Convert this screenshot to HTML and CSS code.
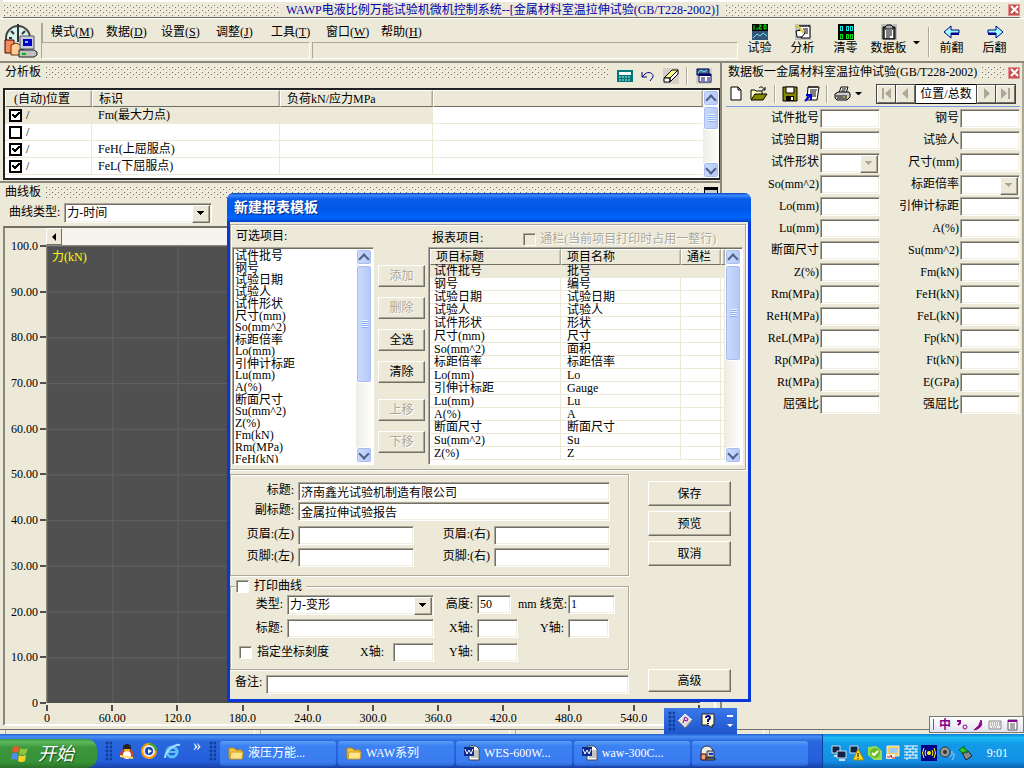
FILE: index.html
```html
<!DOCTYPE html>
<html lang="zh-CN">
<head>
    <meta charset="UTF-8">
    <meta name="viewport" content="width=device-width, initial-scale=1.0">
    <title>WAWP电液比例万能试验机微机控制系统</title>
    <link rel="stylesheet" href="styles.css">
</head>
<body>
    <div class="app">
        <header class="titlebar">
            <span class="grip"></span>
            <h1>WAWP电液比例万能试验机微机控制系统--[金属材料室温拉伸试验(GB/T228-2002)]</h1>
            <span class="grip"></span>
            <button class="close" aria-label="关闭"><svg width="9" height="9" viewBox="0 0 9 9"><path d="M1 1l7 7M8 1l-7 7" stroke="#fff" stroke-width="2"/></svg></button>
        </header>

        <div class="toolbar">
            <svg class="logo" width="34" height="36" viewBox="0 0 34 36">
                <circle cx="14" cy="15" r="12" fill="#d8f4ec" stroke="#444" stroke-width="2"/>
                <path d="M14 5v14M14 1v4M5 15h3M20 15h4M7 8l3 3M21 8l-3 3" stroke="#333" stroke-width="2"/>
                <path d="M1 17h9v13H1z" fill="#f58a5c" stroke="#400" />
                <path d="M7 22l5-2 5 2v10H7z" fill="#fc9" stroke="#630"/>
                <path d="M16 13h14v13H16z" fill="#c8ccd8" stroke="#556"/>
                <path d="M19 16h9v7h-9z" fill="#00c"/><path d="M21 18h3v2h-3z" fill="#7cf"/>
                <path d="M15 27h15l3 2v3l-3 2H15z" fill="#c0c0c0" stroke="#222"/>
                <path d="M18 31h4" stroke="#0b0" stroke-width="2"/>
            </svg>
            <div class="menu-area">
                <nav class="menu">
                    <a href="#">模式(<u>M</u>)</a>
                    <a href="#">数据(<u>D</u>)</a>
                    <a href="#">设置(<u>S</u>)</a>
                    <a href="#">调整(<u>J</u>)</a>
                    <a href="#">工具(<u>T</u>)</a>
                    <a href="#">窗口(<u>W</u>)</a>
                    <a href="#">帮助(<u>H</u>)</a>
                </nav>
                <div class="slots"><span></span><span></span></div>
            </div>
            <div class="tools">
                <button><svg width="16" height="16" viewBox="0 0 16 16"><path d="M0 0h16v16H0z" fill="#357"/><path d="M0 0h16v7H0z" fill="#000"/><path d="M2 1v5M5 4v2M7 1h2v2H7v2h3M12 1h2v4h-2z" fill="none" stroke="#0f0"/><path d="M1 14l4-4 3 2 3-3 4 3" fill="none" stroke="#6ee"/></svg>试验</button>
                <button><svg width="16" height="16" viewBox="0 0 16 16"><path d="M0 0h16v16H0z" fill="#c0c0c0"/><path d="M4 2h11v12H6z" fill="#fff" stroke="#000"/><path d="M5 1v2M8 1v2M11 1v2M14 1v2M8 5h5M9 7h4M9 9h4" stroke="#000"/><path d="M1 7l5-1 4 3-3 4H2z" fill="#fff" stroke="#000"/><path d="M2 1l7 8" stroke="#dc3" stroke-width="2"/></svg>分析</button>
                <button><svg width="16" height="16" viewBox="0 0 16 16" shape-rendering="crispEdges"><path d="M0 0h16v16H0z"/><path d="M2 2h2v4H2zM8 2h2v4H8zM12 2h2v4h-2z" fill="none" stroke="#0ee"/><path d="M2 10h2v4H2zM8 10h2v4H8zM12 10h2v4h-2z" fill="none" stroke="#0d0"/></svg>清零</button>
                <button><svg width="16" height="16" viewBox="0 0 16 16"><path d="M0 0h16v16H0z" fill="#c0c0c0"/><path d="M2 3h12v12H2z" fill="#555" stroke="#000"/><path d="M4 5h8v9H4z" fill="#fff"/><path d="M4 3l2-2h4l2 2v2H4z" fill="#aaa" stroke="#000"/><path d="M5 7h6M5 9h6M5 11h6M5 13h4" stroke="#000"/></svg>数据板</button>
                <span class="drop"></span>
                <span class="bar"></span>
                <button><svg width="18" height="16" viewBox="0 0 18 16"><path d="M1 8l7-6v4h8v3H8v5z" fill="#9ff" stroke="#008"/><path d="M8 10h8" stroke="#008" stroke-width="2"/></svg>前翻</button>
                <button><svg width="18" height="16" viewBox="0 0 18 16"><path d="M17 8l-7-6v4H2v3h8v5z" fill="#9ff" stroke="#008"/><path d="M10 10H2" stroke="#008" stroke-width="2"/></svg>后翻</button>
            </div>
        </div>

        <main class="main">
            <div class="left">
                <section class="panel analysis">
                    <div class="panel-title">
                        <h2>分析板</h2>
                        <span class="grip"></span>
                        <button aria-label="计算"><svg width="16" height="14" viewBox="0 0 16 14"><path d="M0 1h16v12H0z" fill="#077"/><path d="M2 3h12v3H2z" fill="#fff"/><path d="M2 8h12M2 11h12" stroke="#bee" stroke-dasharray="2 1"/></svg></button>
                        <button aria-label="撤消"><svg width="14" height="14" viewBox="0 0 14 14"><path d="M1 3v5h5M1 8l3-3c3-3 9-1 8 3l-3 4" fill="none" stroke="#008"/></svg></button>
                        <button aria-label="擦除" class="shade"><svg width="16" height="16" viewBox="0 0 16 16"><path d="M1 10l8-8h6l-8 8z" fill="#ff8" stroke="#000"/><path d="M1 10h6v4H1zM7 10l8-8v4l-8 8z" fill="#fff" stroke="#000"/></svg></button>
                        <span class="bar"></span>
                        <button aria-label="视图" class="shade"><svg width="16" height="16" viewBox="0 0 16 16"><path d="M1 1h12v6H1z" fill="#468" stroke="#006"/><path d="M2 5l3-3 3 2 3-2" stroke="#7ee" fill="none"/><path d="M3 6h12v8H3z" fill="#fff" stroke="#006"/><path d="M3 7h12" stroke="#006" stroke-width="2"/><path d="M5 10h4M5 12h4M11 10h3M11 12h3" stroke="#006"/></svg></button>
                    </div>
                    <div class="grid-box">
                        <div class="table-wrap">
                            <table class="marks">
                                <thead><tr><th>(自动)位置</th><th>标识</th><th>负荷kN/应力MPa</th><th></th></tr></thead>
                                <tbody>
                                    <tr class="on"><td><label><input type="checkbox" checked>/</label></td><td>Fm(最大力点)</td><td></td><td></td></tr>
                                    <tr><td><label><input type="checkbox">/</label></td><td></td><td></td><td></td></tr>
                                    <tr><td><label><input type="checkbox" checked>/</label></td><td>FeH(上屈服点)</td><td></td><td></td></tr>
                                    <tr><td><label><input type="checkbox" checked>/</label></td><td>FeL(下屈服点)</td><td></td><td></td></tr>
                                </tbody>
                            </table>
                        </div>
                        <div class="scroll"><i class="up"></i><i class="thumb short"></i><i class="down"></i></div>
                    </div>
                </section>

                <section class="panel curve">
                    <div class="panel-title low">
                        <h2>曲线板</h2>
                        <span class="grip"></span>
                        <span class="mini"></span>
                    </div>
                    <div class="curve-type">
                        <label for="curveType">曲线类型:</label>
                        <span class="combo"><select id="curveType"><option>力-时间</option></select></span>
                    </div>
                    <div class="chart">
                        <div class="y-axis">
                            <span>100.0</span><span>90.00</span><span>80.00</span><span>70.00</span><span>60.00</span><span>50.00</span><span>40.00</span><span>30.00</span><span>20.00</span><span>10.00</span><span>0</span>
                        </div>
                        <div class="plot-col">
                            <div class="hscroll"><button aria-label="向左"></button></div>
                            <div class="plot">力(kN)</div>
                            <div class="x-axis">
                                <span>0</span><span>60.00</span><span>120.0</span><span>180.0</span><span>240.0</span><span>300.0</span><span>360.0</span><span>420.0</span><span>480.0</span><span>540.0</span><span>600.0</span>
                            </div>
                        </div>
                    </div>
                </section>
            </div>

            <aside class="right">
                <div class="panel-title low">
                    <h2>数据板一金属材料室温拉伸试验(GB/T228-2002)</h2>
                    <span class="grip"></span>
                    <button class="close" aria-label="关闭数据板"><svg width="9" height="9" viewBox="0 0 9 9"><path d="M1 1l7 7M8 1l-7 7" stroke="#fff" stroke-width="2"/></svg></button>
                </div>
                <div class="data-tools">
                    <button aria-label="新建"><svg width="16" height="16" viewBox="0 0 16 16"><path d="M3 1h7l3 3v10H3zM10 1v3h3" fill="#fff" stroke="#000"/></svg></button>
                    <button aria-label="打开"><svg width="18" height="16" viewBox="0 0 18 16"><path d="M1 13V4h4l1 1h6v3" fill="#ffb" stroke="#000"/><path d="M1 14l4-6h12l-4 6z" fill="#880" stroke="#000"/><path d="M9 2c2-2 4-1 6 2M15 1v3h-3" fill="none" stroke="#000"/></svg></button>
                    <span class="bar"></span>
                    <button aria-label="保存数据"><svg width="16" height="16" viewBox="0 0 16 16"><path d="M1 1h14v14H1z" fill="#880" stroke="#000"/><path d="M4 1h8v6H4z" fill="#fff" stroke="#000"/><path d="M4 10h8v5H4z"/><path d="M9 11h2v3H9z" fill="#fff"/></svg></button>
                    <button aria-label="导入"><svg width="16" height="17" viewBox="0 0 16 17"><path d="M4 2h11l-2 13H3z" fill="#fff" stroke="#000"/><path d="M5 1v2M7 1v2M9 1v2M11 1v2M13 1v2M6 5h7M6 7h6M6 9h6M8 11h4" stroke="#000"/><path d="M1 16l5-5M2 10h5v5" stroke="#00c" stroke-width="2" fill="none"/></svg></button>
                    <span class="bar"></span>
                    <button aria-label="打印"><svg width="17" height="16" viewBox="0 0 17 16"><path d="M5 7l2-6h7l-2 6z" fill="#fff" stroke="#000"/><path d="M1 8l3-2h11l1 2v3l-3 3H3l-2-2z" fill="#ccc" stroke="#000"/><path d="M2 10h11M3 12h10M8 3h4M7 5h4" stroke="#000"/><path d="M9 11h2" stroke="#dd0"/></svg></button>
                    <span class="drop"></span>
                    <div class="pager">
                        <button aria-label="第一条"><svg width="11" height="11" viewBox="0 0 11 11"><path d="M1 0h2v11H1zM10 0v11L4 5.5z" fill="#aca899"/></svg></button>
                        <button aria-label="上一条"><svg width="11" height="11" viewBox="0 0 11 11"><path d="M8 0v11L2 5.5z" fill="#aca899"/></svg></button>
                        <span>位置/总数</span>
                        <button aria-label="下一条"><svg width="11" height="11" viewBox="0 0 11 11"><path d="M3 0v11l6-5.5z" fill="#aca899"/></svg></button>
                        <button aria-label="最后一条"><svg width="11" height="11" viewBox="0 0 11 11"><path d="M8 0h2v11H8zM1 0v11l6-5.5z" fill="#aca899"/></svg></button>
                    </div>
                </div>
                <form class="specs">
                    <label for="d1">试件批号</label><input id="d1"><label for="d2">钢号</label><input id="d2">
                    <label for="d3">试验日期</label><input id="d3"><label for="d4">试验人</label><input id="d4">
                    <label for="d5">试件形状</label><span class="combo off"><select id="d5" disabled></select></span><label for="d6">尺寸(mm)</label><input id="d6">
                    <label for="d7">So(mm^2)</label><input id="d7"><label for="d8">标距倍率</label><span class="combo off"><select id="d8" disabled></select></span>
                    <label for="d9">Lo(mm)</label><input id="d9"><label for="d10">引伸计标距</label><input id="d10">
                    <label for="d11">Lu(mm)</label><input id="d11"><label for="d12">A(%)</label><input id="d12">
                    <label for="d13">断面尺寸</label><input id="d13"><label for="d14">Su(mm^2)</label><input id="d14">
                    <label for="d15">Z(%)</label><input id="d15"><label for="d16">Fm(kN)</label><input id="d16">
                    <label for="d17">Rm(MPa)</label><input id="d17"><label for="d18">FeH(kN)</label><input id="d18">
                    <label for="d19">ReH(MPa)</label><input id="d19"><label for="d20">FeL(kN)</label><input id="d20">
                    <label for="d21">ReL(MPa)</label><input id="d21"><label for="d22">Fp(kN)</label><input id="d22">
                    <label for="d23">Rp(MPa)</label><input id="d23"><label for="d24">Ft(kN)</label><input id="d24">
                    <label for="d25">Rt(MPa)</label><input id="d25"><label for="d26">E(GPa)</label><input id="d26">
                    <label for="d27">屈强比</label><input id="d27"><label for="d28">强屈比</label><input id="d28">
                </form>
            </aside>
        </main>

        <div class="status"><span></span><span></span><span></span><span></span></div>

        <footer class="taskbar">
            <button class="start"><svg width="20" height="20" viewBox="0 0 20 20"><path d="M3 3q3-2 6 0L8 9Q5 7 2 9z" fill="#f0572a"/><path d="M10 4q4 2 8 0l-2 6q-3 2-7 0z" fill="#8cc63e"/><path d="M2 10q3-2 6 0l-1 6q-3-2-6 0z" fill="#4f8ff0"/><path d="M9 11q3 2 7 0l-1 6q-4 2-7 0z" fill="#fbd12e"/></svg>开始</button>
            <i class="dots"></i>
            <div class="quick">
                <button aria-label="QQ"><svg width="17" height="17" viewBox="0 0 17 17"><circle cx="9" cy="5" r="4" fill="#222"/><ellipse cx="9" cy="11" rx="7" ry="5" fill="#c0482a"/><ellipse cx="9" cy="12" rx="4" ry="4" fill="#fff"/><path d="M6 6h6v2H6z" fill="#fa0"/><path d="M2 13l13 2" stroke="#fd6" stroke-width="2"/></svg></button>
                <button aria-label="媒体播放"><svg width="17" height="17" viewBox="0 0 17 17"><circle cx="8" cy="8" r="7" fill="#e8eefc" stroke="#f90" stroke-width="2"/><path d="M8 1a7 7 0 0 1 7 7" stroke="#3a3" stroke-width="2" fill="none"/><circle cx="8" cy="8" r="4" fill="#1545b0"/><path d="M7 6l4 2-4 3z" fill="#fff"/></svg></button>
                <button aria-label="浏览器"><svg width="17" height="17" viewBox="0 0 17 17"><circle cx="8" cy="9" r="5" fill="none" stroke="#5cc0f8" stroke-width="3"/><path d="M4 9h10" stroke="#5cc0f8" stroke-width="2"/><path d="M1 15C1 8 11 1 16 2" fill="none" stroke="#a8e0ff" stroke-width="2"/></svg></button>
                <span>»</span>
            </div>
            <i class="dots"></i>
            <div class="tasks">
                <button><svg width="16" height="14" viewBox="0 0 16 14"><path d="M1 12V2h5l2 2h6v8z" fill="#f5c443" stroke="#b8860b"/><path d="M2 13l1-7h12l-1 7z" fill="#ffe48a" stroke="#d09c20"/></svg>液压万能...</button>
                <button><svg width="16" height="14" viewBox="0 0 16 14"><path d="M1 12V2h5l2 2h6v8z" fill="#f5c443" stroke="#b8860b"/><path d="M2 13l1-7h12l-1 7z" fill="#ffe48a" stroke="#d09c20"/></svg>WAW系列</button>
                <button><svg width="16" height="16" viewBox="0 0 16 16"><path d="M5 1h7l3 3v11H5z" fill="#fff" stroke="#444"/><path d="M10 6h4M10 8h4M7 12h7M10 10h4" stroke="#888"/><path d="M0 2h10v9H0z" fill="#0a2a8c"/><path d="M1 4l2 5 2-4 2 4 2-5" fill="none" stroke="#fff"/></svg>WES-600W...</button>
                <button><svg width="16" height="16" viewBox="0 0 16 16"><path d="M5 1h7l3 3v11H5z" fill="#fff" stroke="#444"/><path d="M10 6h4M10 8h4M7 12h7M10 10h4" stroke="#888"/><path d="M0 2h10v9H0z" fill="#0a2a8c"/><path d="M1 4l2 5 2-4 2 4 2-5" fill="none" stroke="#fff"/></svg>waw-300C...</button>
                <button aria-label="试验机"><svg width="16" height="16" viewBox="0 0 16 16"><circle cx="7" cy="7" r="6" fill="#eee" stroke="#333"/><path d="M1 9h5v6H1z" fill="#f8a070" stroke="#400"/><path d="M7 6h7v6H7z" fill="#ccc" stroke="#333"/><path d="M9 8h4v2H9z" fill="#03c"/><path d="M6 13h9v2H6z" fill="#888" stroke="#222"/></svg></button>
            </div>
            <div class="tray">
                <svg width="16" height="16" viewBox="0 0 16 16"><path d="M1 1h8v7H1z" fill="#124" stroke="#cde"/><path d="M6 6h9v7H6z" fill="#124" stroke="#cde"/><path d="M3 11h3M8 15h6" stroke="#cde" stroke-width="2"/></svg>
                <svg width="16" height="16" viewBox="0 0 16 16"><path d="M1 1h8v7H1z" fill="#124" stroke="#cde"/><path d="M9 4l6 11H4z" fill="#fd2" stroke="#a80"/><path d="M9 8v4M9 13v1" stroke="#000"/></svg>
                <svg width="16" height="16" viewBox="0 0 16 16"><path d="M1 2l8-1 6 5v9l-8 0-6-5z" fill="#9d5"/><circle cx="8" cy="8" r="5" fill="#6b2"/><path d="M5 8l2 2 4-4" stroke="#fff" stroke-width="2" fill="none"/></svg>
                <svg width="16" height="16" viewBox="0 0 16 16"><path d="M2 1h12v10H2z" fill="#fc4" stroke="#eee"/><path d="M5 3h7v5H5z" fill="#9cf"/><path d="M1 9h9v5H1z" fill="#eee"/><path d="M2 12h3l1-2 1 3h3" stroke="#d22" fill="none"/></svg>
                <svg width="16" height="16" viewBox="0 0 16 16"><path d="M1 1h14M1 4h14M1 7h14M1 10h14M1 13h14M4 1v3M10 1v3M7 4v3M13 4v3M4 7v3M10 7v3M7 10v3M13 10v3M4 13v2" stroke="#fff"/></svg>
                <svg width="16" height="16" viewBox="0 0 16 16"><path d="M0 0h16v16H0z" fill="#008"/><circle cx="8" cy="8" r="2" fill="#ff0"/><path d="M5 5q-2 3 0 6M11 5q2 3 0 6M3 3q-3 5 0 10M13 3q3 5 0 10" stroke="#ff0" fill="none"/></svg>
                <svg width="16" height="16" viewBox="0 0 16 16"><circle cx="6" cy="7" r="5" fill="#999" stroke="#333"/><circle cx="6" cy="7" r="2" fill="#333"/><path d="M11 12q3-2 2-6M13 15q3-3 2-7" stroke="#acf" fill="none"/></svg>
                <svg width="16" height="16" viewBox="0 0 16 16"><path d="M5 8l6-2 4 5-6 4z" fill="#889" stroke="#222"/><path d="M2 5l5-4v3q4 0 3 4-1-2-3-1v2z" fill="#3c3" stroke="#060"/></svg>
                <span>9:01</span>
            </div>
        </footer>

        <div class="helper">
            <i class="dots"></i>
            <svg width="16" height="16" viewBox="0 0 16 16"><path d="M8 1l7 6-7 8-7-7z" fill="#ddd" stroke="#fff"/><path d="M1 8l7 7 7-8" fill="none" stroke="#666"/><path d="M6 10l2-6 3 2-1 2-3-1" stroke="#909" fill="none"/></svg>
            <svg width="14" height="16" viewBox="0 0 14 16"><path d="M1 1h12v11h-2v3l-4-3H1z" fill="#ffc" stroke="#222"/><path d="M5 5q0-2 2-2t2 2q0 1-2 2v2M7 10v1" stroke="#00a" stroke-width="2" fill="none"/></svg>
            <svg width="6" height="14" viewBox="0 0 6 14"><path d="M0 1h6v2H0zM0 10h6L3 13z" fill="#fff"/></svg>
        </div>

        <div class="ime">
            <i></i><span>中</span>
            <svg width="12" height="12" viewBox="0 0 12 12"><path d="M1 2h3v2L2 6" stroke="#808" fill="none" stroke-width="2"/><circle cx="9" cy="8" r="2" fill="none" stroke="#808"/></svg>
            <svg width="10" height="12" viewBox="0 0 10 12"><path d="M8 1q3 8-7 10 6-4 7-10z" fill="#808" stroke="#808"/></svg>
            <svg width="14" height="10" viewBox="0 0 14 10"><path d="M1 1h12v8H1z" fill="#eee" stroke="#888"/><path d="M3 3h9M3 5h9M4 7h6" stroke="#888" stroke-dasharray="1 1"/></svg>
            <svg width="11" height="12" viewBox="0 0 11 12"><path d="M1 1h9v10H1z" fill="#fff" stroke="#555"/><path d="M1 2h9" stroke="#808" stroke-width="2"/><path d="M3 5h5M3 7h5M3 9h5" stroke="#555"/></svg>
        </div>

        <div class="dialog" role="dialog" aria-labelledby="dlgTitle">
            <h2 id="dlgTitle" class="dialog-title">新建报表模板</h2>
            <div class="dialog-body">
                <div class="etched picker">
                    <div class="avail">
                        <label for="avail">可选项目:</label>
                        <div class="sunk list-box">
                            <select id="avail" size="18">
                                <option>试件批号</option><option>钢号</option><option>试验日期</option><option>试验人</option><option>试件形状</option><option>尺寸(mm)</option><option>So(mm^2)</option><option>标距倍率</option><option>Lo(mm)</option><option>引伸计标距</option><option>Lu(mm)</option><option>A(%)</option><option>断面尺寸</option><option>Su(mm^2)</option><option>Z(%)</option><option>Fm(kN)</option><option>Rm(MPa)</option><option>FeH(kN)</option>
                            </select>
                            <div class="scroll"><i class="up"></i><i class="thumb tall"></i><i class="down"></i></div>
                        </div>
                    </div>
                    <div class="moves">
                        <button class="btn" disabled>添加</button>
                        <button class="btn" disabled>删除</button>
                        <button class="btn">全选</button>
                        <button class="btn">清除</button>
                        <button class="btn gap" disabled>上移</button>
                        <button class="btn" disabled>下移</button>
                    </div>
                    <div class="report">
                        <div class="report-head">
                            <span>报表项目:</span>
                            <label class="off"><input type="checkbox" disabled>通栏(当前项目打印时占用一整行)</label>
                        </div>
                        <div class="sunk list-box">
                            <div class="table-wrap">
                                <table class="items">
                                    <thead><tr><th>项目标题</th><th>项目名称</th><th>通栏</th><th></th></tr></thead>
                                    <tbody>
                                        <tr class="on"><td>试件批号</td><td>批号</td><td></td><td></td></tr>
                                        <tr><td>钢号</td><td>编号</td><td></td><td></td></tr>
                                        <tr><td>试验日期</td><td>试验日期</td><td></td><td></td></tr>
                                        <tr><td>试验人</td><td>试验人</td><td></td><td></td></tr>
                                        <tr><td>试件形状</td><td>形状</td><td></td><td></td></tr>
                                        <tr><td>尺寸(mm)</td><td>尺寸</td><td></td><td></td></tr>
                                        <tr><td>So(mm^2)</td><td>面积</td><td></td><td></td></tr>
                                        <tr><td>标距倍率</td><td>标距倍率</td><td></td><td></td></tr>
                                        <tr><td>Lo(mm)</td><td>Lo</td><td></td><td></td></tr>
                                        <tr><td>引伸计标距</td><td>Gauge</td><td></td><td></td></tr>
                                        <tr><td>Lu(mm)</td><td>Lu</td><td></td><td></td></tr>
                                        <tr><td>A(%)</td><td>A</td><td></td><td></td></tr>
                                        <tr><td>断面尺寸</td><td>断面尺寸</td><td></td><td></td></tr>
                                        <tr><td>Su(mm^2)</td><td>Su</td><td></td><td></td></tr>
                                        <tr><td>Z(%)</td><td>Z</td><td></td><td></td></tr>
                                    </tbody>
                                </table>
                            </div>
                            <div class="scroll"><i class="up"></i><i class="thumb mid"></i><i class="down"></i></div>
                        </div>
                    </div>
                </div>

                <div class="lower">
                    <div class="forms">
                        <div class="etched heads">
                            <label for="t1">标题:</label><input id="t1" class="wide" value="济南鑫光试验机制造有限公司">
                            <label for="t2">副标题:</label><input id="t2" class="wide" value="金属拉伸试验报告">
                            <label for="t3">页眉:(左)</label><input id="t3"><label for="t4">页眉:(右)</label><input id="t4">
                            <label for="t5">页脚:(左)</label><input id="t5"><label for="t6">页脚:(右)</label><input id="t6">
                        </div>
                        <fieldset class="print">
                            <legend><label><input type="checkbox">打印曲线</label></legend>
                            <label for="p1">类型:</label><span class="combo"><select id="p1"><option>力-变形</option></select></span>
                            <label for="p2">高度:</label><input id="p2" class="short" value="50">
                            <label for="p3">mm 线宽:</label><input id="p3" value="1">
                            <label for="p4">标题:</label><input id="p4">
                            <label for="p5">X轴:</label><input id="p5">
                            <label for="p6">Y轴:</label><input id="p6" class="small">
                            <div class="scale">
                                <label><input type="checkbox">指定坐标刻度</label>
                                <label for="p7">X轴:</label><input id="p7">
                            </div>
                            <label for="p8">Y轴:</label><input id="p8">
                        </fieldset>
                        <div class="note"><label for="note">备注:</label><input id="note"></div>
                    </div>
                    <div class="actions">
                        <button class="btn">保存</button>
                        <button class="btn">预览</button>
                        <button class="btn">取消</button>
                        <button class="btn last">高级</button>
                    </div>
                </div>
            </div>
        </div>
    </div>
</body>
</html>
```
FILE: styles.css
```css
* {
    box-sizing: border-box;
}

body {
    margin: 0;
    background: #ece9d8;
    color: #000;
    font: 12px/14px "Liberation Serif", "Noto Sans CJK SC", serif;
}

h1, h2 {
    margin: 0;
    font-size: 12px;
    font-weight: normal;
    white-space: nowrap;
}

button, input, select {
    font: inherit;
    color: inherit;
    margin: 0;
}

button {
    border: 0;
    padding: 0;
    background: none;
}

svg {
    display: block;
    flex: none;
}

a {
    color: inherit;
    text-decoration: none;
}

label {
    white-space: nowrap;
}

input:not([type=checkbox]), .combo select {
    width: 100%;
    min-width: 0;
    height: 19px;
    padding: 0 2px;
    background: #fff;
    border: 1px solid;
    border-color: #aca899 #fff #fff #aca899;
    border-radius: 0;
    box-shadow: inset 1px 1px 0 #716f64, inset -1px -1px 0 #f1efe2;
    outline: none;
}

input[type=checkbox] {
    appearance: none;
    flex: none;
    width: 13px;
    height: 13px;
    background: #fff;
    border: 1px solid;
    border-color: #aca899 #fff #fff #aca899;
    box-shadow: inset 1px 1px 0 #716f64;
}

.combo {
    position: relative;
    display: block;
}

.combo select {
    appearance: none;
    opacity: 1;
    height: 20px;
}

.combo::after {
    content: "";
    position: absolute;
    top: 2px;
    right: 2px;
    width: 16px;
    height: 16px;
    border: 1px solid;
    border-color: #fff #716f64 #716f64 #fff;
    box-shadow: inset -1px -1px 0 #aca899;
    background: linear-gradient(#000, #000) 4px 5px / 7px 1px no-repeat, linear-gradient(#000, #000) 5px 6px / 5px 1px no-repeat, linear-gradient(#000, #000) 6px 7px / 3px 1px no-repeat, linear-gradient(#000, #000) 7px 8px / 1px 1px no-repeat, #ece9d8;
    pointer-events: none;
}

.combo.off::after {
    background: linear-gradient(#aca899, #aca899) 4px 5px / 7px 1px no-repeat, linear-gradient(#aca899, #aca899) 5px 6px / 5px 1px no-repeat, linear-gradient(#aca899, #aca899) 6px 7px / 3px 1px no-repeat, linear-gradient(#aca899, #aca899) 7px 8px / 1px 1px no-repeat, #ece9d8;
}

.app {
    position: relative;
    display: flex;
    flex-direction: column;
    min-height: 100vh;
    overflow: hidden;
}

/* dotted drag handle */
.grip {
    flex: 1;
    height: 12px;
    background:
        conic-gradient(from 270deg at 1px 1px, #fff 90deg, transparent 0) 0 0 / 6px 5px,
        conic-gradient(from 270deg at 1px 1px, #77756a 90deg, transparent 0) 1px 1px / 6px 5px,
        conic-gradient(from 270deg at 1px 1px, #fff 90deg, transparent 0) 3px 2px / 6px 5px,
        conic-gradient(from 270deg at 1px 1px, #77756a 90deg, transparent 0) 4px 3px / 6px 5px;
}

.bar {
    width: 2px;
    height: 18px;
    border-left: 1px solid #aca899;
    border-right: 1px solid #fff;
}

.drop {
    width: 7px;
    border: 3px solid transparent;
    border-top-color: #000;
    border-bottom: 0;
}

.close {
    width: 12px;
    height: 12px;
    display: flex;
    align-items: center;
    justify-content: center;
    background: #c75050;
    border: 1px solid #e09090;
}

/* top of the window */
.titlebar {
    display: flex;
    align-items: center;
    gap: 6px;
    height: 18px;
    margin: 0 4px 0 3px;
    border-top: 2px solid #fff;
    border-bottom: 1px solid #716f64;
}

.titlebar h1 {
    color: #0000a8;
}

.toolbar {
    display: flex;
    height: 45px;
    padding: 4px 6px 0 4px;
    border-bottom: 2px solid #8a8878;
    border-top: 1px solid #fff;
}

.menu-area {
    flex: 1;
    margin-left: 3px;
}

.menu {
    display: flex;
    height: 19px;
    border-left: 2px solid #aca899;
    padding-left: 8px;
}

.menu a {
    width: 55px;
    line-height: 18px;
}

.slots {
    display: flex;
    gap: 2px;
}

.slots span {
    height: 17px;
    flex: 425;
    border: 1px solid;
    border-color: #aca899 #fff #fff #aca899;
}

.slots span:first-child {
    flex: 268;
}

.tools {
    display: flex;
    align-items: center;
    padding-right: 2px;
}

.tools button {
    display: flex;
    flex-direction: column;
    align-items: center;
    gap: 1px;
    width: 43px;
    height: 36px;
}

.tools .drop {
    margin: 0 8px 0 3px;
}

.tools .bar {
    height: 30px;
}

.main {
    flex: 1;
    display: flex;
}

.left {
    flex: 1;
    min-width: 0;
    display: flex;
    flex-direction: column;
    border-right: 2px solid #8a8878;
}

.panel-title {
    display: flex;
    align-items: center;
    gap: 4px;
    height: 25px;
    padding: 0 8px 0 5px;
}

.panel-title h2 {
    align-self: flex-start;
    line-height: 18px;
}

.panel-title .grip {
    align-self: flex-start;
    margin-top: 3px;
}

.panel-title button {
    margin-left: 4px;
}

.panel-title .bar {
    margin-left: 3px;
}

.panel-title .shade {
    background: #d4d0c8;
}

/* analysis table */
.grid-box {
    display: flex;
    margin: 0 0 1px 3px;
    height: 92px;
    border: 2px solid #222;
    border-right-width: 1px;
    background: #fff;
}

.table-wrap {
    flex: 1;
    min-width: 0;
    overflow: hidden;
}

table {
    width: 100%;
    table-layout: fixed;
    border-collapse: separate;
    border-spacing: 0;
}

th {
    padding: 0 6px;
    font-weight: normal;
    text-align: left;
    white-space: nowrap;
    background: #ece9d8;
    border: 1px solid;
    border-color: #fff #aca899 #716f64 #fff;
    box-shadow: inset -1px 0 0 #cbc7b8;
}

td {
    padding: 0 6px;
    white-space: nowrap;
    border-right: 1px solid #ece9d8;
    border-bottom: 1px solid #ece9d8;
}

.on td {
    background: #ece9d8;
}

.marks th {
    height: 17px;
    line-height: 14px;
}

.marks td {
    height: 17px;
    line-height: 16px;
}

.marks th:nth-child(1) {
    width: 87px;
    padding-left: 8px;
}

.marks th:nth-child(2) {
    width: 188px;
}

.marks th:nth-child(3) {
    width: 153px;
}

.marks td:last-child {
    background: #fff;
    border-right: 0;
}

.marks td:first-child {
    padding-left: 4px;
}

.marks label {
    display: flex;
    align-items: center;
    gap: 4px;
    height: 16px;
}

.marks input[type=checkbox] {
    border: 2px solid #000;
    box-shadow: none;
}

.marks input[type=checkbox]:checked {
    background: linear-gradient(135deg, transparent 40%, #000 40%, #000 65%, transparent 65%) 3px 1px / 6px 6px no-repeat, linear-gradient(45deg, transparent 30%, #000 30%, #000 75%, transparent 75%) 1px 3px / 3px 4px no-repeat, #fff;
}

/* scrollbars */
.scroll {
    display: flex;
    flex-direction: column;
    width: 16px;
    background: linear-gradient(90deg, #eeede5, #fefefb);
}

.scroll i {
    border: 1px solid #fff;
    border-radius: 3px;
    background: linear-gradient(90deg, #cbdafd, #b5c8f7);
    box-shadow: inset 0 0 0 1px #a9bdf0;
}

.scroll .up, .scroll .down {
    height: 16px;
    display: flex;
    align-items: center;
    justify-content: center;
}

.scroll .up::after, .scroll .down::after {
    content: "";
    width: 6px;
    height: 6px;
    margin-top: 3px;
    border: 2px solid #4d6185;
    border-right: 0;
    border-bottom: 0;
    transform: rotate(45deg);
}

.scroll .down::after {
    margin: 0 0 3px;
    transform: rotate(225deg);
}

.scroll .down {
    margin-top: auto;
}

.scroll .thumb {
    display: flex;
    align-items: center;
    justify-content: center;
}

.scroll .thumb::after {
    content: "";
    width: 7px;
    height: 8px;
    background: repeating-linear-gradient(#eef4fe 0 1px, #8cb0f8 1px 2px);
}

.scroll .short {
    height: 24px;
}

.scroll .tall {
    height: 118px;
}

.scroll .mid {
    height: 96px;
}

/* curve panel */
.curve {
    flex: 1;
    display: flex;
    flex-direction: column;
    border-top: 2px solid #8a8878;
}

.panel-title.low {
    height: 19px;
}

.curve .panel-title {
    height: 18px;
}

.mini {
    width: 14px;
    height: 10px;
    background: #ccc;
    border: 1px solid #000;
    border-top-width: 3px;
    margin-right: -6px;
}

.curve-type {
    display: flex;
    align-items: flex-start;
    gap: 4px;
    height: 25px;
    padding: 2px 0 0 9px;
}

.curve-type label {
    line-height: 18px;
}

.curve-type .combo {
    width: 148px;
}

.chart {
    flex: 1;
    display: flex;
    margin: 0 4px 3px 3px;
    border: 2px solid;
    border-color: #716f64 #fff #fff #8a8878;
}

.y-axis {
    width: 41px;
    display: flex;
    flex-direction: column;
    justify-content: space-between;
    margin: 11px 0 14px;
}

.y-axis span {
    display: flex;
    align-items: center;
    justify-content: flex-end;
    gap: 2px;
    line-height: 14px;
}

.y-axis span::after {
    content: "";
    width: 6px;
    height: 2px;
    background: #505050;
}

.plot-col {
    flex: 1;
    display: flex;
    flex-direction: column;
    padding-right: 14px;
}

.hscroll {
    height: 18px;
    background: #f6f4ec;
    border-bottom: 1px solid #8a8878;
}

.hscroll button {
    display: flex;
    align-items: center;
    justify-content: center;
    width: 16px;
    height: 17px;
    background: #ece9d8;
    border: 1px solid;
    border-color: #fff #716f64 #716f64 #fff;
}

.hscroll button::after {
    content: "";
    border: 4px solid transparent;
    border-right-color: #000;
    border-left: 0;
}

.plot {
    flex: 1;
    padding: 4px 5px;
    color: #ff0;
    background-color: #505050;
    background-image: linear-gradient(90deg, #606060 1px, transparent 1px), linear-gradient(#606060 1px, transparent 1px);
    background-size: 10% 10%;
    border-left: 1px solid #8a8878;
}

.x-axis {
    display: flex;
    justify-content: space-between;
    height: 21px;
}

.x-axis span {
    display: flex;
    flex-direction: column;
    align-items: center;
    width: 2px;
    line-height: 12px;
}

.x-axis span::before {
    content: "";
    width: 2px;
    height: 6px;
    margin: 2px 0 1px;
    background: #505050;
}

/* data panel */
.right {
    width: 302px;
    border-right: 2px solid #aca899;
}

.right .panel-title {
    padding: 0 2px 0 6px;
}

.right .panel-title button {
    margin-left: 0;
}

.data-tools {
    display: flex;
    align-items: center;
    gap: 6px;
    height: 25px;
    margin: 0 2px 0 4px;
    padding: 0 4px 1px 2px;
    border-bottom: 1px solid #7a96df;
}

.data-tools .drop {
    margin-left: -2px;
}

.pager {
    display: flex;
    flex: 1;
    min-width: 0;
    height: 20px;
    margin-left: 8px;
    background: #fff;
    border: 1px solid #000;
}

.pager button {
    display: flex;
    align-items: center;
    justify-content: center;
    width: 19px;
    background: #ece9d8;
    border: 1px solid;
    border-color: #fff #716f64 #716f64 #fff;
    outline: 1px solid #444;
}

.pager span {
    flex: 1;
    text-align: center;
    line-height: 18px;
    white-space: nowrap;
}

.specs {
    display: grid;
    grid-template-columns: 1fr 60px 80px 60px;
    grid-auto-rows: 22px;
    padding: 2px 2px 0 0;
}

.specs label {
    padding-right: 1px;
    line-height: 18px;
    text-align: right;
}

.status {
    display: flex;
    gap: 5px;
    height: 5px;
    padding: 0 5px;
    border-top: 1px solid #716f64;
}

.status span {
    flex: 1;
    border-left: 1px solid #aca899;
    border-right: 1px solid #fff;
}

/* taskbar */
.taskbar {
    display: flex;
    align-items: center;
    height: 34px;
    color: #fff;
    background: linear-gradient(#1f5ed0, #4a90f5 8%, #2a68dd 20%, #245edb 80%, #1941a5);
}

.start {
    display: flex;
    align-items: center;
    gap: 8px;
    align-self: flex-end;
    width: 97px;
    height: 29px;
    padding-left: 10px;
    font-size: 18px;
    font-style: italic;
    line-height: 24px;
    background: linear-gradient(#3a9a3a, #5eb85c 10%, #3c963c 30%, #379237 80%, #2a6f2a);
    border-radius: 0 10px 10px 0;
    text-shadow: 1px 1px 1px #1d4d1d;
}

.dots {
    width: 7px;
    height: 20px;
    background: radial-gradient(circle at 2px 2px, #123f9c 1px, transparent 2px) 0 0 / 4px 4px;
}

.taskbar .dots {
    margin-left: 8px;
}

.quick {
    display: flex;
    align-items: center;
    gap: 6px;
    padding-left: 6px;
}

.quick span {
    font-size: 16px;
    padding: 0 0 10px 6px;
}

.tasks {
    flex: 1;
    display: flex;
    gap: 2px;
    padding: 4px 14px 0 4px;
}

.tasks button {
    flex: 1;
    min-width: 0;
    display: flex;
    align-items: center;
    gap: 4px;
    height: 25px;
    padding-left: 8px;
    white-space: nowrap;
    background: linear-gradient(#5c9cf8, #3c81f3 20%, #3a7cf0 85%, #2c62d0);
    border-radius: 3px;
}

.tray {
    display: flex;
    align-items: center;
    gap: 2px;
    align-self: stretch;
    padding: 0 16px 0 8px;
    background: linear-gradient(#0d7fd8, #19b9f3 10%, #129be8 30%, #1290e4 80%, #0b62b0);
    border-left: 1px solid #0a3f9c;
}

.tray svg {
    margin-top: 4px;
}

.tray span {
    margin: 4px 0 0 12px;
}

/* small toolbars floating over the window */
.helper {
    position: absolute;
    left: 664px;
    top: 708px;
    display: flex;
    align-items: center;
    gap: 8px;
    width: 73px;
    height: 26px;
    padding-left: 4px;
    background: linear-gradient(#3a78e8, #1f55cc);
}

.helper .dots {
    margin-right: -6px;
}

.helper svg:last-child {
    margin-left: 4px;
}

.ime {
    position: absolute;
    right: 0;
    top: 716px;
    display: flex;
    align-items: center;
    gap: 5px;
    height: 17px;
    padding: 0 5px 0 3px;
    background: linear-gradient(#fff, #e4e2ee);
    border: 1px solid #777;
    color: #808;
    font-weight: bold;
}

.ime i {
    width: 1px;
    height: 11px;
    background: #666;
}

/* report template dialog */
.dialog {
    position: absolute;
    left: 227px;
    top: 193px;
    width: 524px;
    background: #ece9d8;
    border: 3px solid #0838d8;
    border-top: 0;
    border-radius: 7px 7px 0 0;
}

.dialog-title {
    height: 29px;
    margin: 0 -3px;
    padding-left: 7px;
    color: #fff;
    font-size: 14px;
    font-weight: bold;
    line-height: 30px;
    background: linear-gradient(#0a3fc0, #3a8cff 8%, #0a5cea 20%, #0058e8 60%, #0066ff 85%, #0042c8);
    border-radius: 7px 7px 0 0;
    text-shadow: 1px 1px 0 #0a2a80;
}

.dialog-body {
    padding: 2px 0 5px;
}

.etched, .print {
    border: 1px solid #aca899;
    box-shadow: 1px 1px 0 #fff, inset 1px 1px 0 #fff;
}

.picker {
    display: flex;
    height: 246px;
    margin-right: 2px;
    padding: 4px 2px 4px 1px;
}

.avail {
    width: 142px;
}

.avail > label {
    display: block;
    height: 18px;
    padding-left: 4px;
}

.sunk {
    border: 1px solid;
    border-color: #aca899 #fff #fff #aca899;
    box-shadow: inset 1px 1px 0 #716f64;
}

.list-box {
    display: flex;
    height: 218px;
    padding: 1px;
    background: #fff;
}

.avail select {
    flex: 1;
    min-width: 0;
    height: 214px;
    padding: 0;
    border: 0;
    outline: none;
    background: #fff;
    overflow: hidden;
    scrollbar-width: none;
}

.avail option {
    display: flex;
    align-items: center;
    height: 12px;
    min-height: 0;
    padding: 0 1px;
    line-height: 12px;
}

/* keeps Latin and Chinese rows on the same baseline */
.avail option::before {
    content: "\200b";
    font-family: "Noto Sans CJK SC", sans-serif;
}

.moves {
    display: flex;
    flex-direction: column;
    gap: 10px;
    width: 54px;
    padding: 36px 3px 0 4px;
}

.btn {
    height: 22px;
    background: #ece9d8;
    border: 1px solid;
    border-color: #fff #716f64 #716f64 #fff;
    box-shadow: inset -1px -1px 0 #aca899;
}

.btn:disabled, .off {
    color: #aca899;
    text-shadow: 1px 1px 0 #fff;
}

.moves .gap {
    margin-top: 6px;
}

.report {
    flex: 1;
    min-width: 0;
}

.report-head {
    display: flex;
    gap: 40px;
    height: 18px;
    padding: 2px 0 0 4px;
}

.report-head label {
    display: flex;
    align-items: center;
    gap: 4px;
}

.report-head input[type=checkbox] {
    background: #ece9d8;
}

.items th {
    height: 16px;
    line-height: 13px;
    padding: 0 5px;
}

.items td {
    height: 13px;
    padding: 0 4px;
    line-height: 12px;
}

.items th:nth-child(2) {
    width: 120px;
}

.items th:nth-child(3) {
    width: 40px;
}

.items th:nth-child(4) {
    width: 4px;
    padding: 0;
}

.items td:last-child {
    padding: 0;
}

.items td:nth-child(2) {
    padding-left: 6px;
}

.lower {
    display: flex;
    padding-top: 4px;
}

.forms {
    width: 399px;
}

.heads {
    display: grid;
    grid-template-columns: 67px 116px 80px 116px;
    grid-template-rows: 20px 24px 22px 20px;
    height: 102px;
    padding-top: 7px;
}

.heads label {
    padding-right: 4px;
    line-height: 16px;
    text-align: right;
}

.heads .wide {
    grid-column: 2 / 5;
    width: 312px;
}

.print {
    display: grid;
    grid-template-columns: 56px 147px 43px 41px 50px 47px;
    grid-auto-rows: 24px;
    margin: 4px 0 0;
    height: 90px;
    padding: 2px 0 0;
}

.print legend {
    margin-left: 5px;
    padding: 0 4px 0 0;
    height: 13px;
    background: #ece9d8;
}

.print legend label, .scale label {
    display: flex;
    align-items: center;
    gap: 5px;
    padding: 0;
    line-height: 13px;
}

.print > label {
    padding-right: 4px;
    line-height: 18px;
    text-align: right;
}

.print .short {
    width: 34px;
}

.print .small {
    width: 41px;
}

.scale {
    grid-column: 1 / 3;
    display: flex;
    align-items: center;
    justify-content: space-between;
    gap: 9px;
    height: 19px;
    padding-left: 8px;
}

.scale label:first-child {
    margin-right: auto;
}

.scale > input:not([type=checkbox]) {
    width: 41px;
}

.note {
    display: flex;
    gap: 4px;
    margin-top: 5px;
    padding-left: 5px;
}

.actions {
    flex: 1;
    display: flex;
    flex-direction: column;
    gap: 5px;
    padding: 7px 17px 2px 19px;
}

.actions .btn {
    height: 25px;
}

.actions .last {
    margin-top: auto;
    height: 23px;
}
```
